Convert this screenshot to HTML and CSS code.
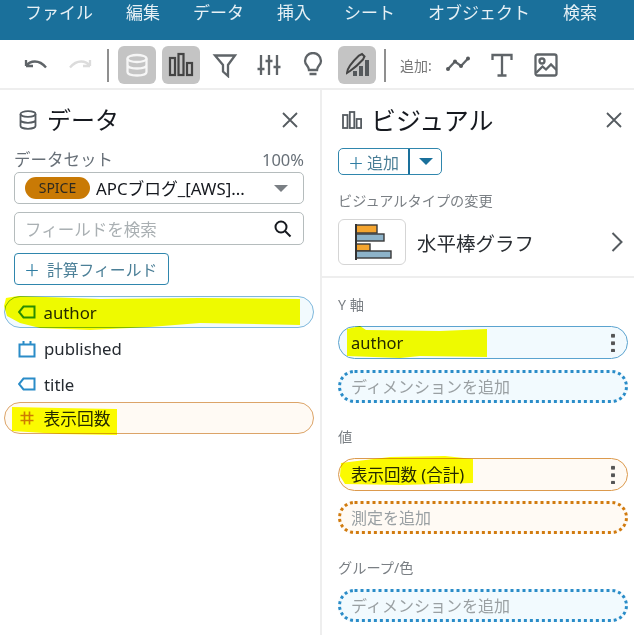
FILE: index.html
```html
<!DOCTYPE html>
<html lang="ja">
<head>
<meta charset="utf-8">
<title>ビジュアル</title>
<link rel="stylesheet" href="styles.css">
</head>
<body>
<div class="app">
  <nav class="menu">
    <span>ファイル</span><span>編集</span><span>データ</span><span>挿入</span><span>シート</span><span>オブジェクト</span><span>検索</span>
  </nav>
  <div class="toolbar">
    <span class="tool"><svg width="28" height="28" viewBox="0 0 28 28" class="ic-s"><path d="M4 15H11M4 15V9M4 15C8 9.500 17 8 24 16.500" /></svg></span>
    <span class="tool off"><svg width="28" height="28" viewBox="0 0 28 28" class="ic-s"><path d="M24 15H17M24 15V9M24 15C20 9.500 11 8 4 16.500" /></svg></span>
    <span class="sep"></span>
    <span class="tool on"><svg width="26" height="26" viewBox="0 0 26 26" class="ic-w"><ellipse cx="13" cy="6.500" rx="9.500" ry="3.500"/><path d="M3.500 6.500V20c0 2 4 3.500 9.500 3.500s9.500-1.500 9.500-3.500V6.500M3.500 13c0 2 4 3.500 9.500 3.500s9.500-1.500 9.500-3.500"/></svg></span>
    <span class="tool on"><svg width="26" height="26" viewBox="0 0 26 26" class="ic-d"><rect x="2" y="6" width="5" height="17"/><rect x="10.500" y="2" width="5" height="21"/><rect x="19" y="11" width="5" height="12"/></svg></span>
    <span class="tool"><svg width="26" height="26" viewBox="0 0 26 26" class="ic-s"><path d="M3 3.500H23L16 13V24L11 19.500V13Z"/></svg></span>
    <span class="tool"><svg width="26" height="26" viewBox="0 0 26 26" class="ic-s"><path d="M5 3V23M13 3V23M21 3V23M1.500 17H8.500M9.500 9H16.500M17.500 15H24.500"/></svg></span>
    <span class="tool"><svg width="26" height="26" viewBox="0 0 26 26" class="ic-s"><path d="M9 18C9 14 5 13 5 9A8 8 0 0 1 21 9C21 13 17 14 17 18ZM9.500 22H16.500"/></svg></span>
    <span class="tool on"><svg width="26" height="26" viewBox="0 0 26 26"><path class="brush" d="M3 21C3 17 6 12 15 3.500L18 2L20.500 4.500L19 7.500C13 14 9 17 6 19Z"/><rect class="fill" x="9" y="19" width="4" height="5"/><rect class="fill" x="15" y="14" width="4" height="10"/><rect class="fill" x="21" y="8" width="4" height="16"/></svg></span>
    <span class="sep sep2"></span>
    <span class="add-label">追加:</span>
    <span class="tool"><svg width="26" height="26" viewBox="0 0 26 26" class="ic-s"><path d="M3 17L10 9.500L16 14L23 6.500"/><circle class="fill" cx="3" cy="17" r="2"/><circle class="fill" cx="10" cy="9.500" r="2"/><circle class="fill" cx="16" cy="14" r="2"/><circle class="fill" cx="23" cy="6.500" r="2"/></svg></span>
    <span class="tool"><svg width="26" height="26" viewBox="0 0 26 26" class="ic-s"><path d="M3.500 8V3H22.500V8M13 3V23.500M8.500 23.500H17.500"/></svg></span>
    <span class="tool"><svg width="26" height="26" viewBox="0 0 26 26" class="ic-s"><rect x="2.500" y="2.500" width="21" height="21" rx="2"/><circle cx="9" cy="9" r="2.500"/><path d="M3 21L9.500 14.500L13 17.500L18 12.500L23.500 18"/></svg></span>
  </div>
  <div class="panels">
    <section class="panel left">
      <header class="phead">
        <svg width="18" height="20" viewBox="0 0 18 20" class="ic-t"><ellipse cx="9" cy="4" rx="7.500" ry="2.800"/><path d="M1.500 4V16c0 1.500 3.300 2.800 7.500 2.800s7.500-1.300 7.500-2.800V4M1.500 10c0 1.500 3.300 2.800 7.500 2.800s7.500-1.300 7.500-2.800"/></svg>
        <h1>データ</h1>
        <svg class="close" width="18" height="18" viewBox="0 0 18 18"><path d="M2 2L16 16M16 2L2 16"/></svg>
      </header>
      <div class="ds-label"><span>データセット</span><span class="pct">100%</span></div>
      <div class="select">
        <span class="spice">SPICE</span>
        <span class="ds-name">APCブログ_[AWS]...</span>
        <span class="caret"></span>
      </div>
      <div class="search">
        <span>フィールドを検索</span>
        <svg width="20" height="20" viewBox="0 0 20 20"><circle cx="8" cy="8" r="5.500"/><path d="M12 12L17.500 17.500"/></svg>
      </div>
      <div class="calc"><span class="plus">＋</span><span>計算フィールド</span></div>
      <ul class="fields">
        <li class="field dim sel">
          <svg width="18" height="14" viewBox="0 0 18 14"><path d="M5.500 1.500H16.500V12.500H5.500L1 7Z"/></svg>author
        </li>
        <li class="field dim">
          <svg width="18" height="18" viewBox="0 0 18 18"><path d="M1.500 4.500H16.500V16.500H1.500ZM5.500 1V4.500M12.500 1V4.500"/></svg>published
        </li>
        <li class="field dim">
          <svg width="18" height="14" viewBox="0 0 18 14"><path d="M5.500 1.500H16.500V12.500H5.500L1 7Z"/></svg>title
        </li>
        <li class="field mea sel">
          <svg width="18" height="18" viewBox="0 0 18 18"><path d="M6.500 2.500V15.500M11.500 2.500V15.500M2.500 6.500H15.500M2.500 11.500H15.500"/></svg>表示回数
        </li>
      </ul>
    </section>
    <section class="panel right">
      <header class="phead rhead">
        <svg width="20" height="18" viewBox="0 0 20 18" class="ic-t"><rect x="1" y="4" width="4.500" height="13"/><rect x="7.800" y="1" width="4.500" height="16"/><rect x="14.600" y="8" width="4.500" height="9"/></svg>
        <h1>ビジュアル</h1>
        <svg class="close" width="18" height="18" viewBox="0 0 18 18"><path d="M2 2L16 16M16 2L2 16"/></svg>
      </header>
      <div class="split">
        <span class="split-main"><span class="plus">＋</span>追加</span>
        <span class="split-more"><span class="caret blue"></span></span>
      </div>
      <p class="label type-label">ビジュアルタイプの変更</p>
      <div class="type">
        <span class="thumb">
          <svg width="40" height="36" viewBox="0 0 40 36"><rect class="o" x="2" y="1" width="21" height="8"/><rect class="b" x="2" y="10" width="28" height="7"/><rect class="o" x="2" y="20" width="14" height="7"/><rect class="b" x="2" y="27" width="35" height="7"/><path class="axis" d="M2 0V36"/></svg>
        </span>
        <span class="type-name">水平棒グラフ</span>
        <svg class="chev" width="14" height="22" viewBox="0 0 14 22"><path d="M2.500 2L11.500 11L2.500 20"/></svg>
      </div>
      <div class="wells">
        <p class="label">Y 軸</p>
        <div class="well dim-w"><span>author</span><i class="dots"></i></div>
        <div class="drop dim-d">ディメンションを追加</div>
        <p class="label l2">値</p>
        <div class="well mea-w"><span>表示回数 (合計)</span><i class="dots"></i></div>
        <div class="drop mea-d">測定を追加</div>
        <p class="label l3">グループ/色</p>
        <div class="drop dim-d">ディメンションを追加</div>
      </div>
    </section>
  </div>
  <svg class="marks" width="634" height="635" viewBox="0 0 634 635">
    <path d="M6 298L18 296L100 299L200 298L300 299V325L200 323L150 327L90 330L40 328L20 323L7 316L4 306Z"/>
    <path d="M12 407L60 408L117 409V435L60 434L12 431Z"/>
    <path d="M347 329L360 326L366 330L440 331L487 329V357L420 356L400 358L347 356Z"/>
    <path d="M341 463L390 457L445 456L473 459V483L400 485L345 484L340 476Z"/>
  </svg>
</div>
</body>
</html>
```
FILE: styles.css
```css
* { box-sizing: border-box; }
html, body { margin: 0; padding: 0; }
body {
  width: 634px;
  height: 635px;
  overflow: hidden;
  background: #fff;
  font-family: "Noto Sans", "Noto Sans CJK JP", sans-serif;
  color: #2a2e33;
}
.app { position: relative; width: 634px; height: 635px; overflow: hidden; }
svg { display: block; fill: none; flex: none; }

.menu {
  height: 40px;
  background: #1a709b;
  color: #e6f0f5;
  font-size: 17px;
  line-height: 25px;
  display: flex;
  gap: 33px;
  padding-left: 25px;
}
.menu span { white-space: nowrap; }

.toolbar {
  height: 50px;
  display: flex;
  align-items: center;
  gap: 6px;
  padding: 2px 0 0 17px;
  border-bottom: 2px solid #eeeeee;
}
.tool {
  width: 38px;
  height: 38px;
  border-radius: 6px;
  display: flex;
  align-items: center;
  justify-content: center;
  color: #555b60;
}
.tool.on { background: #c4c4c4; }
.ic-s { stroke: #5f6468; stroke-width: 2.300; }
.ic-w { stroke: #f6f6f6; stroke-width: 2.300; }
.ic-d { stroke: #444; stroke-width: 2.200; }
.off .ic-s { stroke: #dcdcdc; }
.fill { fill: #55595c; stroke: none; }
.brush { stroke: #444; stroke-width: 2; }
.sep { width: 2px; height: 33px; background: #8f8f8f; margin: 0 3px 0 2px; }
.sep2 { margin: 0 3px 0 2px; }
.add-label { font-size: 14px; color: #777; width: 32px; margin-left: 5px; margin-right: 1px; white-space: nowrap; }

.panels { display: flex; height: 545px; }
.panel { flex: none; }
.left { width: 322px; padding: 0 16px 0 14px; border-right: 2px solid #eeeeee; }
.right { flex: 1; padding: 0 6px 0 16px; }
.phead { display: flex; align-items: center; height: 60px; padding-left: 5px; gap: 10px; }
.phead h1 { margin: 0; font-size: 24px; font-weight: 400; line-height: 36px; color: #16191f; }
.ic-t { stroke: #555b60; stroke-width: 1.800; }
.close { margin-left: auto; margin-right: 5px; stroke: #555b60; stroke-width: 1.800; }
.rhead { padding-left: 4px; gap: 9px; }
.rhead h1 { font-size: 25px; }
.rhead .close { margin-right: 5px; }

.ds-label {
  display: flex;
  justify-content: space-between;
  font-size: 16.500px;
  line-height: 20px;
  margin-bottom: 2px;
  color: #687078;
}
.pct { font-size: 16.500px; }
.select {
  height: 32px;
  border: 1.500px solid #b5bcbd;
  border-radius: 5px;
  display: flex;
  align-items: center;
  padding-left: 10px;
  padding-right: 15px;
}
.spice {
  width: 65px;
  height: 22px;
  border-radius: 11px;
  background: #c97a05;
  color: #2f2a20;
  font-size: 14px;
  line-height: 22px;
  text-align: center;
}
.ds-name { margin-left: 6px; font-size: 16.800px; color: #16191f; white-space: nowrap; }
.caret {
  margin-left: auto;
  width: 0;
  height: 0;
  border-left: 7px solid transparent;
  border-right: 7px solid transparent;
  border-top: 7px solid #7a7f84;
}
.caret.blue { margin: 0; border-top-color: #1a709b; }
.search {
  height: 33px;
  margin-top: 8px;
  border: 1.500px solid #b5bcbd;
  border-radius: 5px;
  display: flex;
  align-items: center;
  justify-content: space-between;
  padding: 0 10px;
  font-size: 16.500px;
  color: #aab0b3;
}
.search svg { stroke: #16191f; stroke-width: 2; }
.calc {
  width: 155px;
  height: 32px;
  margin-top: 8px;
  border: 1.500px solid #2f86ad;
  border-radius: 4px;
  display: flex;
  align-items: center;
  padding-left: 6px;
  gap: 4px;
  font-size: 15.800px;
  color: #4b7f97;
}
.plus { font-size: 16px; color: #2f7da3; width: 22px; text-align: center; }

.fields { list-style: none; margin: 11px 0 0 -10px; padding: 0; width: 310px; }
.field {
  height: 35.500px;
  display: flex;
  align-items: center;
  gap: 8px;
  padding-left: 14px;
  font-size: 16.800px;
  color: #252a30;
}
.field.sel { height: 32px; border-radius: 16px; border: 1.500px solid; padding-left: 12.500px; }
.field.dim svg { stroke: #2a8cc8; stroke-width: 2; }
.field.mea svg { stroke: #d17b0f; stroke-width: 1.600; }
.field.dim.sel { background: #f2fafe; border-color: #7fb8dc; margin-bottom: 3px; }
.field.mea.sel { background: #fffaf4; border-color: #dca468; }

.split { display: flex; width: 104px; height: 27px; margin-top: -2px; border: 1.500px solid #2f86ad; border-radius: 5px; }
.split-main { width: 71px; display: flex; align-items: center; font-size: 16px; color: #4b7f97; border-right: 2px solid #1a709b; padding-left: 6px; gap: 0; }
.split-more { flex: 1; display: flex; align-items: center; justify-content: center; }
.label { margin: 0; font-size: 14.200px; line-height: 20px; color: #7a7f84; }
.type-label { margin-top: 16px; }
.type { display: flex; align-items: center; height: 46px; margin-top: 8px; }
.thumb { width: 68px; height: 46px; border: 1.500px solid #d5d5d5; border-radius: 6px; display: flex; align-items: center; padding-left: 15px; }
.o { fill: #f5a52f; stroke: #3a3a3a; stroke-width: 1.400; }
.b { fill: #8db3c9; stroke: #3a3a3a; stroke-width: 1.400; }
.axis { stroke: #333; stroke-width: 2; }
.type-name { margin-left: 11px; font-size: 19.500px; color: #2a2e33; }
.chev { margin-left: auto; margin-right: 4px; stroke: #555b60; stroke-width: 2; }

.wells { margin: 11px -6px 0 -16px; padding: 17px 6px 0 16px; border-top: 2px solid #eeeeee; }
.well {
  height: 33px;
  margin-top: 11px;
  border: 1.500px solid;
  border-radius: 17px;
  display: flex;
  align-items: center;
  justify-content: space-between;
  padding: 0 12px 1px;
  font-size: 16.500px;
  color: #252a30;
}
.dim-w { background: #f2fafe; border-color: #5ba3cf; }
.mea-w { background: #fffaf4; border-color: #dc9a4d; }
.dots { width: 4px; height: 20px; background: radial-gradient(circle, #555 2px, transparent 2.300px) center top / 4px 7.500px repeat-y; }
.drop {
  height: 33px;
  margin-top: 11px;
  border: 3px dotted;
  border-radius: 17px;
  display: flex;
  align-items: center;
  padding: 0 0 2px 10px;
  font-size: 16px;
  color: #9aa0a3;
}
.dim-d { background: #f2fafe; border-color: #2a8cc8; }
.mea-d { background: #fffaf4; border-color: #d17b0f; margin-top: 10px; }
.l2 { margin-top: 24px; }
.l3 { margin-top: 24px; }

.marks { position: absolute; left: 0; top: 0; pointer-events: none; mix-blend-mode: multiply; }
.marks path { fill: #fbff00; }
```
